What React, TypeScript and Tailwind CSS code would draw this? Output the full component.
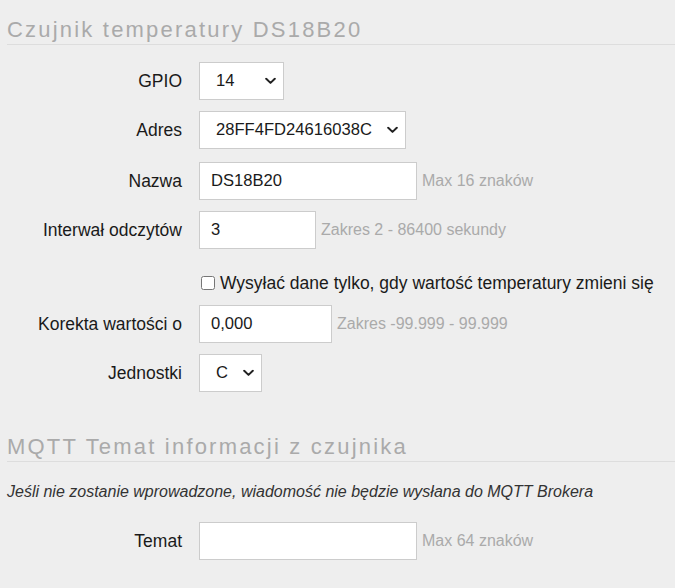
import { ReactNode } from "react";

const font = { fontFamily: '"Liberation Sans", Arial, sans-serif' };

function Chevron() {
  return (
    <svg
      className="pointer-events-none absolute right-[7px] top-1/2 -translate-y-1/2"
      width="11"
      height="7"
      viewBox="0 0 11 7"
      fill="none"
    >
      <path d="M1.2 1.2 5.5 5.4 9.8 1.2" stroke="#222" strokeWidth="2" strokeLinecap="round" strokeLinejoin="round" />
    </svg>
  );
}

function Select({ value, width }: { value: string; width: string }) {
  return (
    <div className={`relative h-[38px] ${width} border border-[#cccccc] bg-white`}>
      <div className="flex h-full items-center pl-[16px] text-[16.6px] text-[#1a1a1a]">{value}</div>
      <Chevron />
    </div>
  );
}

function TextInput({ value, width }: { value: string; width: string }) {
  return (
    <div className={`flex h-[38px] ${width} items-center border border-[#cccccc] bg-white pl-[11px] text-[16.6px] text-[#1a1a1a]`}>
      {value}
    </div>
  );
}

function Row({ label, children, hint, className }: { label: string; children: ReactNode; hint?: string; className?: string }) {
  return (
    <div className={`flex items-center ${className ?? ""}`}>
      <div className="w-[182px] shrink-0 text-right text-[17.5px] text-[#1a1a1a]">{label}</div>
      <div className="ml-[17px] flex items-center">
        {children}
        {hint && <span className="ml-[5px] text-[16px] text-[#aaaaaa]">{hint}</span>}
      </div>
    </div>
  );
}

function Heading({ title, className }: { title: string; className?: string }) {
  return (
    <div className={`ml-[7px] border-b border-[#dddddd] ${className ?? ""}`}>
      <h2 className="h-[28px] text-[22px] leading-[28px] tracking-[2.2px] text-[#aaaaaa]">{title}</h2>
    </div>
  );
}

export default function App() {
  return (
    <div style={font} className="h-[588px] w-[675px] overflow-hidden bg-[#eeeeee]">
      <Heading title="Czujnik temperatury DS18B20" className="pt-[16px]" />

      <Row label="GPIO" className="mt-[17px]">
        <Select value="14" width="w-[85px]" />
      </Row>
      <Row label="Adres" className="mt-[11px]">
        <Select value="28FF4FD24616038C" width="w-[207px]" />
      </Row>
      <Row label="Nazwa" hint="Max 16 znaków" className="mt-[13px]">
        <TextInput value="DS18B20" width="w-[218px]" />
      </Row>
      <Row label="Interwał odczytów" hint="Zakres 2 - 86400 sekundy" className="mt-[11px]">
        <TextInput value="3" width="w-[117px]" />
      </Row>

      <label className="ml-[201px] mt-[24px] flex h-[20px] items-center text-[17.5px] text-[#1a1a1a]">
        <input type="checkbox" className="m-0 mr-[5px] h-[14px] w-[14px]" />
        Wysyłać dane tylko, gdy wartość temperatury zmieni się
      </label>

      <Row label="Korekta wartości o" hint="Zakres -99.999 - 99.999" className="mt-[12px]">
        <TextInput value="0,000" width="w-[133px]" />
      </Row>
      <Row label="Jednostki" className="mt-[11px]">
        <Select value="C" width="w-[63px]" />
      </Row>

      <Heading title="MQTT Temat informacji z czujnika" className="mt-[41px]" />

      <p className="ml-[7px] mt-[20px] h-[20px] text-[16px] italic leading-[20px] text-[#333]">
        Jeśli nie zostanie wprowadzone, wiadomość nie będzie wysłana do MQTT Brokera
      </p>

      <Row label="Temat" hint="Max 64 znaków" className="mt-[20px]">
        <TextInput value="" width="w-[218px]" />
      </Row>
    </div>
  );
}
